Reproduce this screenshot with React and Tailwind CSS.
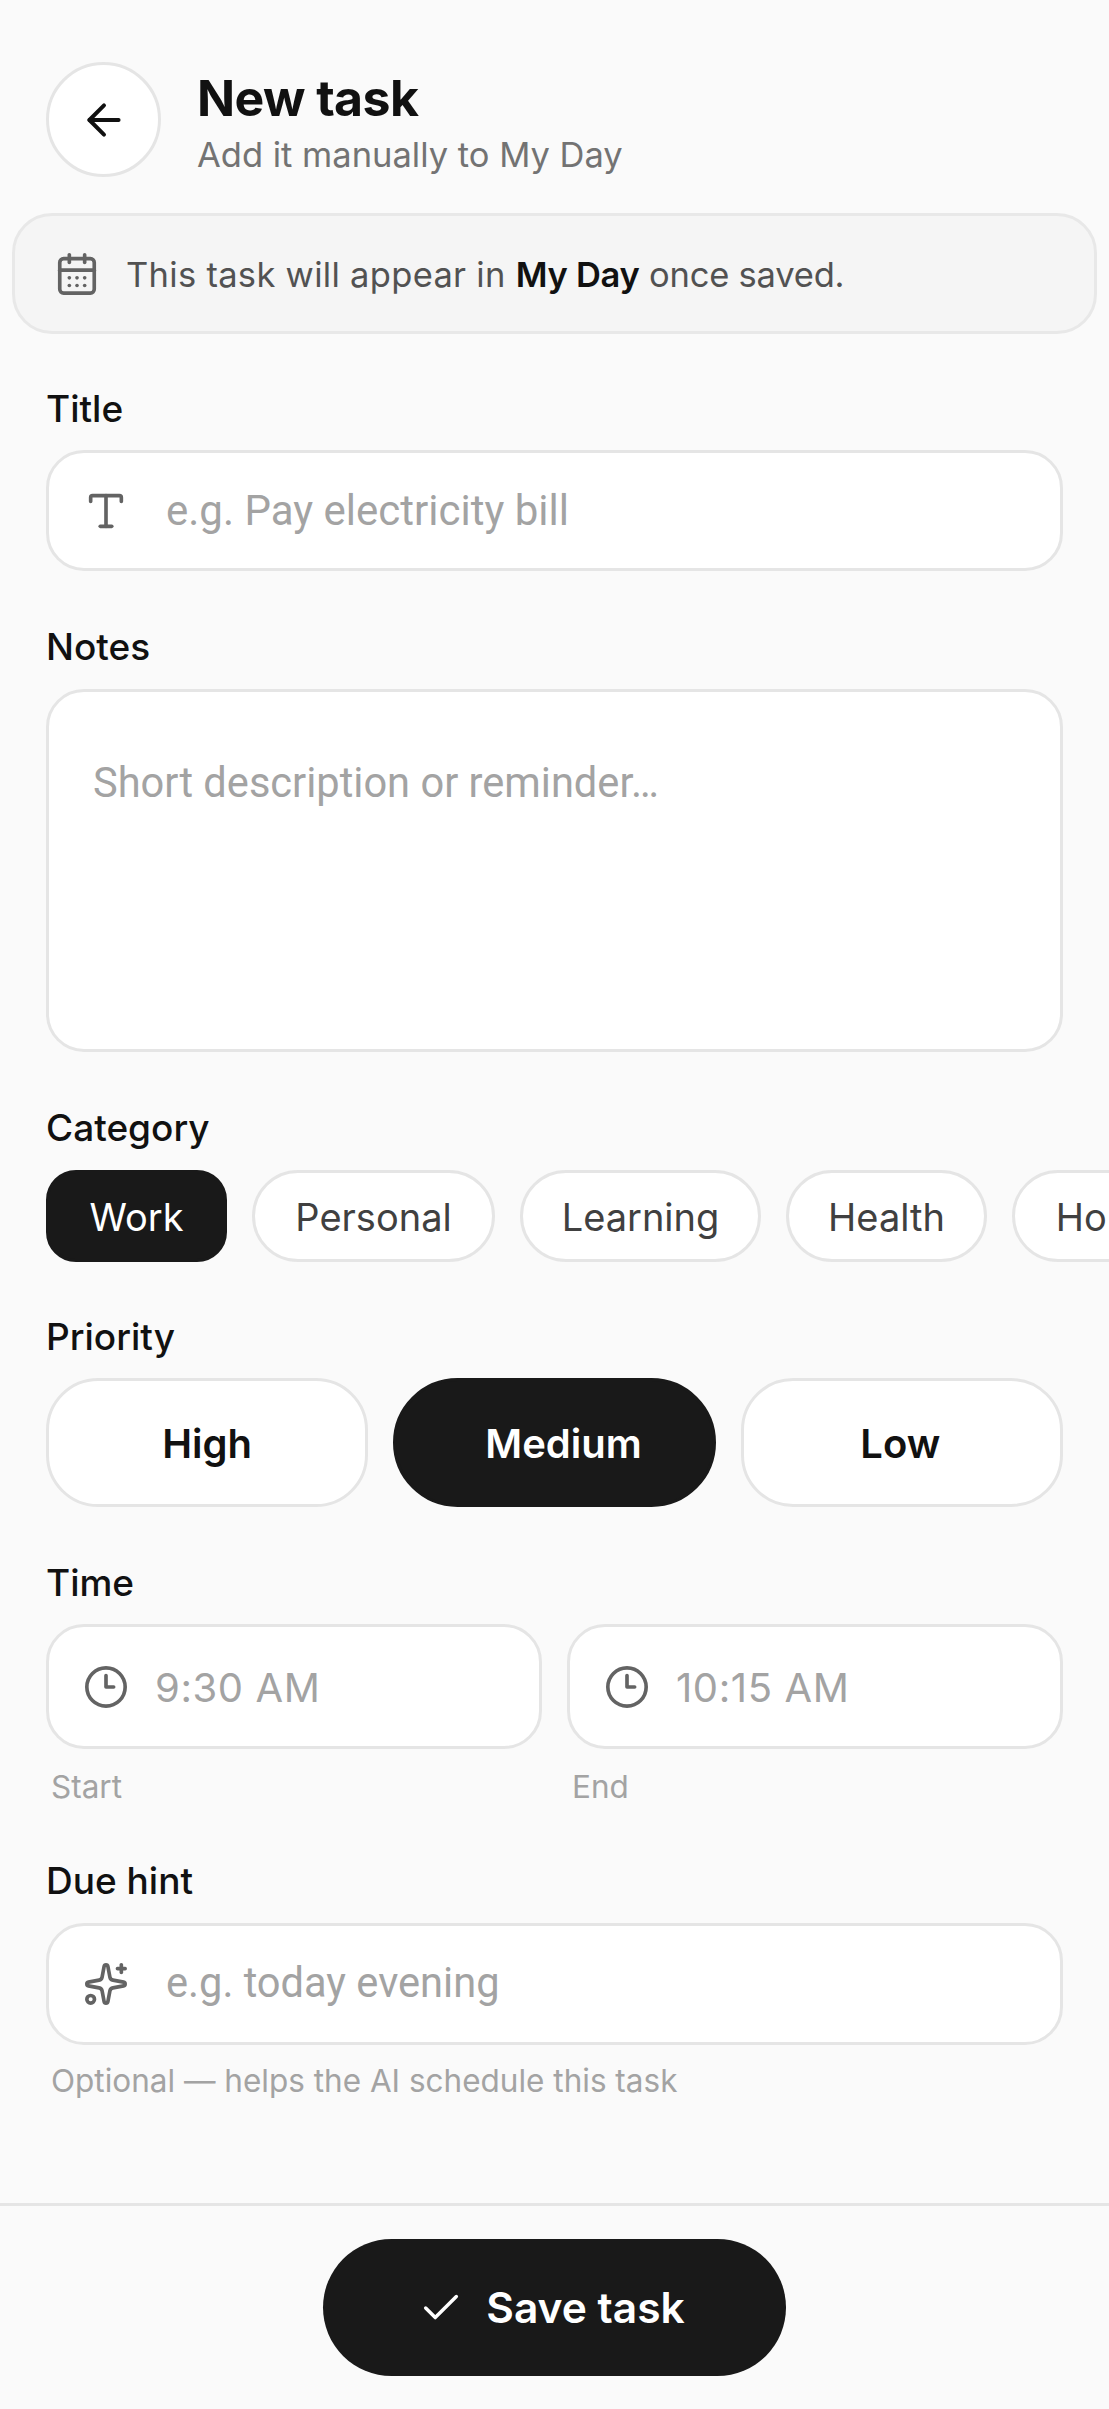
import React from 'react'
import { ArrowLeft, CalendarDays, Check, Clock3, Sparkles, Type } from 'lucide-react'

const categories = [
  { label: 'Work', className: 'w-[181px] rounded-[30px] border-[#191919] bg-[#191919] text-white' },
  { label: 'Personal', className: 'w-[243px] rounded-[46px] border-[#e5e5e5] bg-white text-[#404040]' },
  { label: 'Learning', className: 'w-[241px] rounded-[46px] border-[#e5e5e5] bg-white text-[#404040]' },
  { label: 'Health', className: 'w-[201px] rounded-[46px] border-[#e5e5e5] bg-white text-[#404040]' },
  { label: 'Home', className: 'w-[194px] rounded-[46px] border-[#e5e5e5] bg-white text-[#404040]' },
]

const priorities = [
  { label: 'High', className: 'rounded-[52px] border-[#e5e5e5] bg-white text-[#111111]' },
  { label: 'Medium', className: 'rounded-full border-[#191919] bg-[#191919] pl-[18px] text-white' },
  { label: 'Low', className: 'rounded-[52px] border-[#e5e5e5] bg-white pr-[3px] text-[#111111]' },
]

const Label = ({ children, className }) => (
  <div className={`text-[37px] leading-[44px] font-medium text-[#111111] ${className}`}>{children}</div>
)

const Hint = ({ children, className }) => (
  <div className={`pl-[5px] text-[31.5px] leading-[38px] text-[#a3a3a3] ${className}`}>{children}</div>
)

const Field = ({ icon: Icon, children, className }) => (
  <div
    className={`flex items-center rounded-[38px] border-[3px] border-[#e5e5e5] bg-white pl-[34px] text-[#a3a3a3] ${className}`}
  >
    <Icon className="size-[46px] shrink-0 text-[#636363]" strokeWidth={1.9} />
    {children}
  </div>
)

const TimeField = ({ value }) => (
  <Field icon={Clock3} className="h-[125px] flex-1 text-[40px]">
    <span className="ml-[26px] pt-[2px] tracking-[0.6px]">{value}</span>
  </Field>
)

export default function App() {
  return (
    <div className="flex min-h-[2409px] w-[1109px] flex-col overflow-hidden bg-[#fafafa] font-['Inter',sans-serif]">
      <div className="flex h-[2203px] flex-col">
        <div className="flex items-start gap-[36px] pt-[62px] pl-[46px]">
          <div className="flex size-[115px] items-center justify-center rounded-full border-[3px] border-[#e5e5e5] bg-white">
            <ArrowLeft className="size-[50px] text-[#111111]" strokeWidth={1.9} />
          </div>
          <div className="pt-[8px]">
            <div className="text-[50px] leading-[56px] font-bold tracking-[-0.6px] text-[#111111]">New task</div>
            <div className="mt-[8px] text-[34.5px] leading-[42px] text-[#737373]">Add it manually to My Day</div>
          </div>
        </div>

        <div className="mx-[12px] mt-[36px] flex h-[121px] items-center rounded-[40px] border-[3px] border-[#e8e8e8] bg-[#f5f5f5] pl-[39px] text-[34.5px] text-[#525252]">
          <CalendarDays className="size-[46px] shrink-0 text-[#636363]" strokeWidth={1.9} />
          <span className="ml-[26px] pt-[2px]">
            <span className="tracking-[0.3px]">This task will appear in </span>
            <b className="font-semibold tracking-[-0.3px] text-[#111111]">My Day</b>
            <span className="tracking-[-0.2px]"> once saved.</span>
          </span>
        </div>

        <div className="px-[46px]">
          <Label className="mt-[53px]">Title</Label>
          <Field icon={Type} className="mt-[19px] h-[121px] font-['Roboto',sans-serif] text-[42px]">
            <span className="ml-[37px]">e.g. Pay electricity bill</span>
          </Field>

          <Label className="mt-[54px]">Notes</Label>
          <div className="mt-[20px] h-[363px] rounded-[38px] border-[3px] border-[#e5e5e5] bg-white pt-[66px] pl-[44px] font-['Roboto',sans-serif] text-[41.6px] leading-[50px] text-[#a3a3a3]">
            Short description or reminder…
          </div>

          <Label className="mt-[54px]">Category</Label>
          <div className="mt-[20px] flex gap-[25px]">
            {categories.map((c) => (
              <div
                key={c.label}
                className={`flex h-[92px] shrink-0 items-center justify-center border-[3px] pt-[2px] text-[38px] ${c.className}`}
              >
                {c.label}
              </div>
            ))}
          </div>

          <Label className="mt-[53px]">Priority</Label>
          <div className="mt-[19px] grid grid-cols-3 gap-[25px]">
            {priorities.map((p) => (
              <div
                key={p.label}
                className={`flex h-[129px] items-center justify-center border-[3px] pt-[2px] text-[40px] font-semibold ${p.className}`}
              >
                {p.label}
              </div>
            ))}
          </div>

          <Label className="mt-[54px]">Time</Label>
          <div className="mt-[19px] flex gap-[25px]">
            <div className="flex-1">
              <TimeField value="9:30 AM" />
              <Hint className="mt-[19px]">Start</Hint>
            </div>
            <div className="flex-1">
              <TimeField value="10:15 AM" />
              <Hint className="mt-[19px]">End</Hint>
            </div>
          </div>

          <Label className="mt-[53px]">Due hint</Label>
          <Field icon={Sparkles} className="mt-[20px] h-[122px] font-['Roboto',sans-serif] text-[41.6px]">
            <span className="ml-[37px] pb-[2px]">e.g. today evening</span>
          </Field>
          <Hint className="mt-[17px]">Optional — helps the AI schedule this task</Hint>
        </div>
      </div>

      <div className="flex flex-1 justify-center border-t-[3px] border-[#e5e5e5] pt-[33px]">
        <div className="flex h-[137px] w-[463px] items-center justify-center gap-[22px] rounded-full bg-[#191919] pr-[6px] text-[42.5px] font-semibold text-white">
          <Check className="size-[46px]" strokeWidth={1.8} />
          Save task
        </div>
      </div>
    </div>
  )
}
